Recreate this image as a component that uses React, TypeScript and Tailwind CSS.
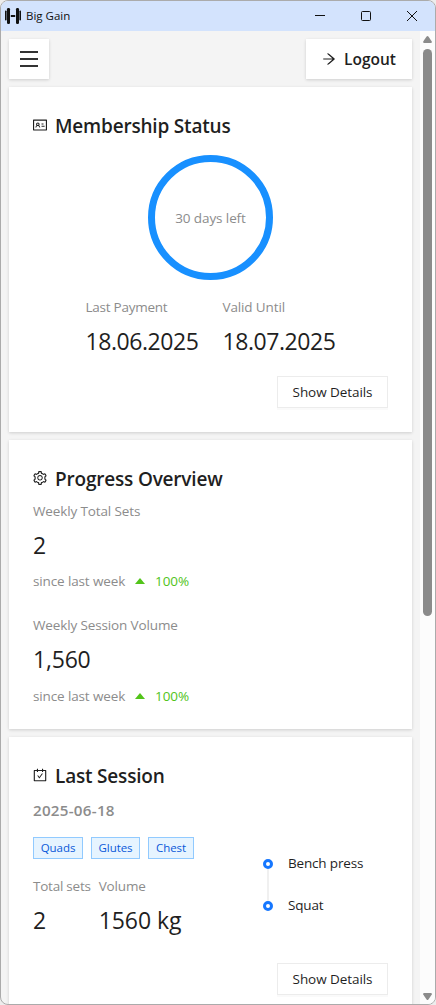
import type { ReactNode } from "react";
import {
  AiOutlineArrowRight,
  AiOutlineCarryOut,
  AiOutlineIdcard,
  AiOutlineSetting,
} from "react-icons/ai";

function TitleBar() {
  return (
    <header className="flex h-[30px] shrink-0 items-center bg-[#d3e3fd] pl-1">
      <svg width="16" height="18" viewBox="0 0 16 18" fill="#111">
        <rect x="0" y="3.5" width="1.6" height="10" rx="0.7" />
        <rect x="2" y="1" width="3" height="16" rx="1.2" />
        <rect x="5.8" y="8" width="4.4" height="2" />
        <rect x="11" y="1" width="3" height="16" rx="1.2" />
        <rect x="14.4" y="3.5" width="1.6" height="10" rx="0.7" />
      </svg>
      <span className="ml-[5px] text-[11.5px] text-[#111]">Big Gain</span>
      <div className="ml-auto flex items-center">
        <svg width="120" height="30" viewBox="0 0 120 30" fill="none" stroke="#111" strokeWidth="1">
          <path d="M0 14.5h10" />
          <rect x="46.5" y="10.5" width="9" height="9" rx="1" />
          <path d="M92 10l10 10M102 10l-10 10" />
        </svg>
      </div>
    </header>
  );
}

function Scrollbar() {
  return (
    <div className="flex w-[15px] shrink-0 flex-col items-center bg-[#fcfcfc]">
      <svg className="mt-[5px] shrink-0" width="9" height="7" viewBox="0 0 9 7" fill="#8b8b8b">
        <path d="M3.6.6Q4.5-.4 5.4.6L8.8 5.6Q9 7 8 7H1Q0 7 .2 5.6z" />
      </svg>
      <div className="mt-[6px] h-[567px] w-[9px] rounded-full bg-[#8b8b8b]" />
      <svg className="mt-auto mb-[4px] shrink-0" width="9" height="7" viewBox="0 0 9 7" fill="#8b8b8b">
        <path d="M3.6 6.4Q4.5 7.4 5.4 6.4L8.8 1.4Q9 0 8 0H1Q0 0 .2 1.4z" />
      </svg>
    </div>
  );
}

const surface = "bg-white shadow-[0_1px_3px_rgba(0,0,0,0.16)]";

function Card({ icon, title, className, children }: { icon: ReactNode; title: string; className: string; children: ReactNode }) {
  return (
    <section className={`flex shrink-0 flex-col px-6 pt-6 ${surface} ${className}`}>
      <h2 className="flex h-[30px] items-center text-[19px] font-semibold tracking-[-0.19px]">
        <span className="-mt-[3px] mr-[7px] -ml-px text-base">{icon}</span>
        {title}
      </h2>
      {children}
    </section>
  );
}

function Statistic({
  label,
  value,
  labelClass = "tracking-[-0.13px]",
  valueClass = "tracking-[-0.2px]",
}: {
  label: string;
  value: string;
  labelClass?: string;
  valueClass?: string;
}) {
  return (
    <div className="whitespace-nowrap">
      <div className={`h-[22px] text-[13.5px] leading-[22px] text-[#8c8c8c] ${labelClass}`}>{label}</div>
      <div className={`mt-1 h-[38px] text-[23px] leading-[38px] ${valueClass}`}>{value}</div>
    </div>
  );
}

function Trend() {
  return (
    <div className="flex h-[22px] items-center text-[13.5px] tracking-[-0.13px] text-[#8c8c8c]">
      since last week
      <svg className="ml-[10px]" width="10" height="6" viewBox="0 0 10 6" fill="#52c41a">
        <path d="M0 6L5 0l5 6z" />
      </svg>
      <span className="ml-[10px] text-[#52c41a]">100%</span>
    </div>
  );
}

function DetailsButton() {
  return (
    <button className="h-8 w-[111px] self-end border border-[#ececec] bg-white pt-px text-[13.5px] tracking-[-0.07px] shadow-[0_2px_0_rgba(0,0,0,0.02)]">
      Show Details
    </button>
  );
}

function Tag({ children, className }: { children: string; className: string }) {
  return (
    <span className={`flex h-[22px] items-center justify-center border border-[#91caff] bg-[#e6f4ff] text-[11.5px] tracking-[-0.05px] text-[#0958d9] ${className}`}>
      {children}
    </span>
  );
}

function Exercise({ name }: { name: string }) {
  return (
    <li className="flex h-[22px] items-center text-[13.5px] tracking-[-0.17px]">
      <span className="mr-[15px] size-[10px] rounded-full border-[3px] border-[#1677ff] bg-white" />
      <span className="pb-[2px]">{name}</span>
    </li>
  );
}

export default function App() {
  return (
    <div className="h-[1005px] w-[436px] bg-[#ededed] font-['Open_Sans','Noto_Sans',sans-serif] text-[#1f1f1f]">
      <div className="flex h-full flex-col overflow-hidden rounded-lg border border-[#ababab] bg-[#f4f4f4]">
        <TitleBar />
        <div className="flex min-h-0 flex-1">
          <main className="flex min-w-0 flex-1 flex-col gap-2 overflow-hidden p-2">
            <nav className="flex shrink-0 justify-between">
              <button className={`flex size-10 items-center justify-center ${surface}`} aria-label="Menu">
                <svg width="18" height="16" viewBox="0 0 18 16" fill="#333">
                  <path d="M0 0h18v2H0zM0 7h18v2H0zM0 14h18v2H0z" />
                </svg>
              </button>
              <button className={`flex h-10 w-[106px] items-center justify-center pt-px text-[15.5px] font-semibold ${surface}`}>
                <AiOutlineArrowRight className="-mt-px mr-[7px] -ml-px size-4" />
                Logout
              </button>
            </nav>

            <Card icon={<AiOutlineIdcard />} title="Membership Status" className="h-[345px]">
              <div className="mt-[14px] flex size-[125px] items-center justify-center self-center rounded-full border-[7.5px] border-[#1890ff] pt-[2px] text-[13.5px] tracking-[-0.1px] text-[#8c8c8c]">
                30 days left
              </div>
              <div className="mt-4 mb-4 flex justify-center gap-6">
                <Statistic label="Last Payment" value="18.06.2025" labelClass="tracking-[-0.25px]" valueClass="tracking-[-0.43px]" />
                <Statistic label="Valid Until" value="18.07.2025" valueClass="tracking-[-0.43px]" />
              </div>
              <DetailsButton />
            </Card>

            <Card icon={<AiOutlineSetting />} title="Progress Overview" className="h-[289px]">
              <div className="mt-[6px]">
                <Statistic label="Weekly Total Sets" value="2" />
                <div className="mt-[6px]"><Trend /></div>
              </div>
              <div className="mt-[22px]">
                <Statistic label="Weekly Session Volume" value="1,560" />
                <div className="mt-[7px]"><Trend /></div>
              </div>
            </Card>

            <Card icon={<AiOutlineCarryOut />} title="Last Session" className="h-[283px]">
              <div className="mt-[7px] h-6 text-[15.2px] leading-6 font-semibold tracking-[0.25px] text-[#8c8c8c]">2025-06-18</div>
              <div className="flex">
                <div>
                  <div className="mt-[15px] flex gap-2">
                    <Tag className="w-[50px]">Quads</Tag>
                    <Tag className="w-[49px]">Glutes</Tag>
                    <Tag className="w-[46px]">Chest</Tag>
                  </div>
                  <div className="mt-4 flex gap-2">
                    <Statistic label="Total sets" value="2" labelClass="tracking-[-0.24px]" />
                    <Statistic label="Volume" value="1560 kg" valueClass="tracking-[-0.05px]" />
                  </div>
                </div>
                <div className="mt-[31px] ml-[69px]">
                  <ul>
                    <Exercise name="Bench press" />
                    <li className="ml-1 -my-[6px] h-8 w-[2px] bg-[#f0f0f0]" />
                    <Exercise name="Squat" />
                  </ul>
                </div>
              </div>
              <div className="mt-6 flex justify-end"><DetailsButton /></div>
            </Card>
          </main>
          <Scrollbar />
        </div>
      </div>
    </div>
  );
}
